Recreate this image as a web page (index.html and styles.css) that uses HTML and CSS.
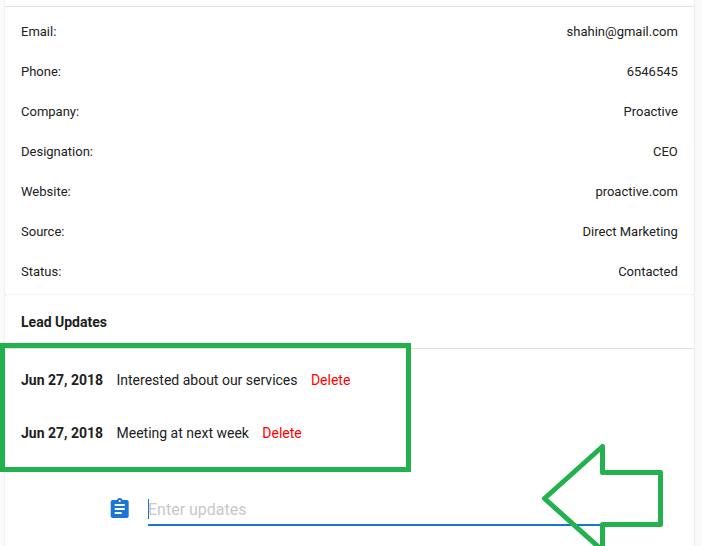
FILE: index.html
```html
<!DOCTYPE html>
<html lang="en">
<head>
<meta charset="utf-8">
<title>Lead</title>
<link rel="stylesheet" href="styles.css">
</head>
<body>
<main class="page">
  <section class="card details">
    <div class="details-head"></div>
    <dl class="fields">
      <div class="field"><dt>Email:</dt><dd>shahin@gmail.com</dd></div>
      <div class="field"><dt>Phone:</dt><dd>6546545</dd></div>
      <div class="field"><dt>Company:</dt><dd>Proactive</dd></div>
      <div class="field"><dt>Designation:</dt><dd>CEO</dd></div>
      <div class="field"><dt>Website:</dt><dd>proactive.com</dd></div>
      <div class="field"><dt>Source:</dt><dd>Direct Marketing</dd></div>
      <div class="field"><dt>Status:</dt><dd>Contacted</dd></div>
    </dl>
  </section>
  <section class="card updates">
    <h2 class="title">Lead Updates</h2>
    <div class="update"><b>Jun 27, 2018</b><span>Interested about our services</span><a class="delete">Delete</a></div>
    <div class="update"><b>Jun 27, 2018</b><span>Meeting at next week</span><a class="delete">Delete</a></div>
    <div class="entry">
      <svg class="icon" viewBox="0.300 0 24 24"><path fill="currentColor" d="M19 3h-4.180C14.400 1.840 13.300 1 12 1s-2.400.84-2.820 2H5c-1.100 0-2 .9-2 2v14c0 1.100.9 2 2 2h14c1.100 0 2-.9 2-2V5c0-1.100-.9-2-2-2zm-7 0c.55 0 1 .45 1 1s-.45 1-1 1-1-.45-1-1 .45-1 1-1zm2 14H7v-2h7v2zm3-4H7v-2h10v2zm0-4H7V7h10v2z"/></svg>
      <div class="input"><span class="caret"></span><span class="placeholder">Enter updates</span></div>
    </div>
  </section>
</main>
<div class="highlight"></div>
<svg class="arrow" viewBox="0 0 130 120"><path d="M4.500 58.500 62.500 6.500V32.500H120.500V84.500H62.500V110.500Z"/></svg>
</body>
</html>
```
FILE: styles.css
```css
* { box-sizing: border-box; }
body {
  margin: 0;
  height: 546px;
  overflow: hidden;
  position: relative;
  background: #fafafa;
  color: #212121;
  font-family: Roboto, sans-serif;
}
.page { padding: 0 8px 0 5px; }
.card {
  background: #fff;
  box-shadow: 0 0 2px rgba(0, 0, 0, .16);
}
.details { height: 295px; border-radius: 0 0 2px 2px; width: 689px; }
.details-head { height: 7px; border-bottom: 1px solid #e0e0e0; }
.fields { margin: 0; padding: 4px 16.200px 0 16px; }
.field {
  display: flex;
  justify-content: space-between;
  align-items: center;
  height: 40px;
  font-size: 13px;
}
.field dd { margin: 0; }
.updates { width: 689px; height: 260px; border-radius: 2px 2px 0 0; }
.title {
  display: flex;
  align-items: center;
  height: 54px;
  margin: 0;
  padding: 0 16px;
  border-bottom: 1px solid #e0e0e0;
  font-size: 14px;
  font-weight: 700;
}
.update {
  display: flex;
  align-items: center;
  gap: 13.400px;
  height: 53px;
  padding: 0 16px;
  font-size: 14px;
}
.title + .update { margin-top: 4px; }
.delete { color: #f00; }
.entry {
  display: flex;
  align-items: flex-start;
  padding: 38px 0 0 103px;
}
.icon { width: 24px; height: 24px; color: #1976d2; }
.input {
  position: relative;
  width: 455px;
  height: 29px;
  margin-left: 16px;
  border-bottom: 2px solid #1976d2;
  color: #c8c8c8;
  font-size: 16px;
  line-height: 25px;
}
.placeholder { display: block; }
.caret {
  position: absolute;
  left: 0;
  top: 2px;
  width: 1px;
  height: 20px;
  background: #1976d2;
}
.highlight {
  position: absolute;
  left: 0;
  top: 343px;
  width: 411px;
  height: 129px;
  border: 5px solid #22b14c;
}
.arrow {
  position: absolute;
  left: 540px;
  top: 440px;
  width: 130px;
  height: 120px;
  fill: none;
  stroke: #22b14c;
  stroke-width: 5;
  stroke-linejoin: round;
}
```
